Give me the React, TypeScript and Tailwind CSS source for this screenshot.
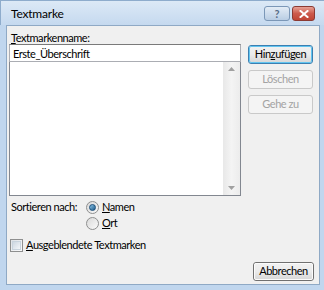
import React from "react";

const font = { fontFamily: 'Lato, "Noto Sans", sans-serif' };

function Btn({
  children,
  disabled,
  def,
  className = "",
}: {
  children: React.ReactNode;
  disabled?: boolean;
  def?: boolean;
  className?: string;
}) {
  if (disabled) {
    return (
      <div
        className={`h-[19px] flex items-center justify-center rounded-[3px] border border-[#c9c9c9] bg-[#f4f4f4] text-[#a3a3a3] whitespace-nowrap ${className}`}
      >
        {children}
      </div>
    );
  }
  return (
    <div
      className={`h-[19px] flex items-center justify-center rounded-[3px] border ${
        def ? "border-[#3c7fb1]" : "border-[#707070]"
      } bg-gradient-to-b from-[#f2f2f2] via-[#ebebeb] to-[#d6d6d6] text-black whitespace-nowrap ${className}`}
    >
      <div
        className={`w-full h-full flex items-center justify-center rounded-[2px] border ${
          def ? "border-[#62c5f0]" : "border-[#fbfbfb]"
        }`}
      >
        {children}
      </div>
    </div>
  );
}

function Radio({ checked }: { checked?: boolean }) {
  return (
    <div className="w-[13px] h-[13px] shrink-0 rounded-full border border-[#8e8f8f] bg-gradient-to-br from-[#d9d9d9] to-[#fafafa] flex items-center justify-center">
      {checked && (
        <div className="w-[7px] h-[7px] rounded-full bg-gradient-to-br from-[#8ac4e8] to-[#1d5d8a] border border-[#1a4e7a]" />
      )}
    </div>
  );
}

export default function App() {
  return (
    <div
      className="w-[324px] h-[290px] bg-[#c0d6ee] flex flex-col text-[11px] tracking-[-0.45px] text-black select-none overflow-hidden whitespace-nowrap"
      style={font}
    >
      {/* Title bar */}
      <div className="h-[25px] flex items-center bg-gradient-to-b from-[#dce9f6] to-[#c5d9ef] pl-[10px] pr-[9px] border-t border-l border-[#8eaccc]">
        <span className="text-[12px] tracking-[-0.2px] text-black leading-none mt-[1px]">Textmarke</span>
        <div className="ml-auto flex items-center gap-[2px] mt-[1px]">
          <div className="w-[26px] h-[15px] rounded-[3px] border border-[#7b97b7] bg-gradient-to-b from-[#e3ecf6] to-[#b9cde3] flex items-center justify-center">
            <span className="text-[11px] tracking-normal font-bold text-[#576c86] leading-none">?</span>
          </div>
          <div className="w-[23px] h-[15px] rounded-[3px] border border-[#8b3a33] bg-gradient-to-b from-[#e6a095] via-[#cc5a4c] to-[#c04434] flex items-center justify-center">
            <svg width="10" height="8" viewBox="0 0 10 8">
              <path d="M1.5 1 L8.5 7 M8.5 1 L1.5 7" stroke="#fff" strokeWidth="2" strokeLinecap="square" />
            </svg>
          </div>
        </div>
      </div>

      {/* Client area */}
      <div className="flex-1 ml-[6px] mr-[4px] mb-[5px] bg-[#f0f0f0] border border-[#8fa9c5] flex flex-col pl-[2px] pr-[5px] pt-[5px]">
        <div className="h-[13px] leading-[13px] pl-[2px]">
          <span className="underline">T</span>extmarkenname:
        </div>
        <div className="flex gap-[7px]">
          <div className="w-[232px] flex flex-col">
            <div className="h-[18px] border border-[#abadb3] border-t-[#7a7a7a] bg-white flex items-center pl-[3px] leading-none">
              Erste_Überschrift
            </div>
            <div className="h-[134px] border border-[#828790] border-t-0 bg-white flex justify-end">
              <div className="w-[17px] h-full bg-gradient-to-r from-[#e8e8e8] via-[#f4f4f4] to-[#ececec] flex flex-col items-center justify-between py-[5px]">
                <svg width="7" height="4" viewBox="0 0 7 4">
                  <path d="M0 4 L3.5 0 L7 4 Z" fill="#a0a0a0" />
                </svg>
                <svg width="7" height="4" viewBox="0 0 7 4">
                  <path d="M0 0 L3.5 4 L7 0 Z" fill="#a0a0a0" />
                </svg>
              </div>
            </div>
          </div>
          <div className="w-[65px] flex flex-col gap-[6px] pt-[1px]">
            <Btn def>
              <span>
                Hin<span className="underline">z</span>ufügen
              </span>
            </Btn>
            <Btn disabled>Löschen</Btn>
            <Btn disabled>Gehe zu</Btn>
          </div>
        </div>

        <div className="flex mt-[3px] pl-[2px]">
          <div className="w-[75px] h-[16px] leading-[16px]">Sortieren nach:</div>
          <div className="flex flex-col">
            <div className="h-[16px] flex items-center gap-[3px]">
              <Radio checked />
              <span>
                <span className="underline">N</span>amen
              </span>
            </div>
            <div className="h-[16px] flex items-center gap-[3px]">
              <Radio />
              <span>
                <span className="underline">O</span>rt
              </span>
            </div>
          </div>
        </div>

        <div className="flex items-center gap-[3px] mt-[6px] pl-[1px]">
          <div className="w-[13px] h-[13px] shrink-0 border border-[#8e8f8f] bg-gradient-to-br from-[#dde1e6] to-[#fbfbfb] flex items-center justify-center">
            <div className="w-[9px] h-[9px] border border-[#c8d3dd] bg-gradient-to-br from-[#cdd7e1] to-[#f3f6f9]" />
          </div>
          <span>
            <span className="underline">A</span>usgeblendete Textmarken
          </span>
        </div>

        <div className="flex justify-end mt-[8px]">
          <Btn className="w-[61px]">Abbrechen</Btn>
        </div>
      </div>
    </div>
  );
}
